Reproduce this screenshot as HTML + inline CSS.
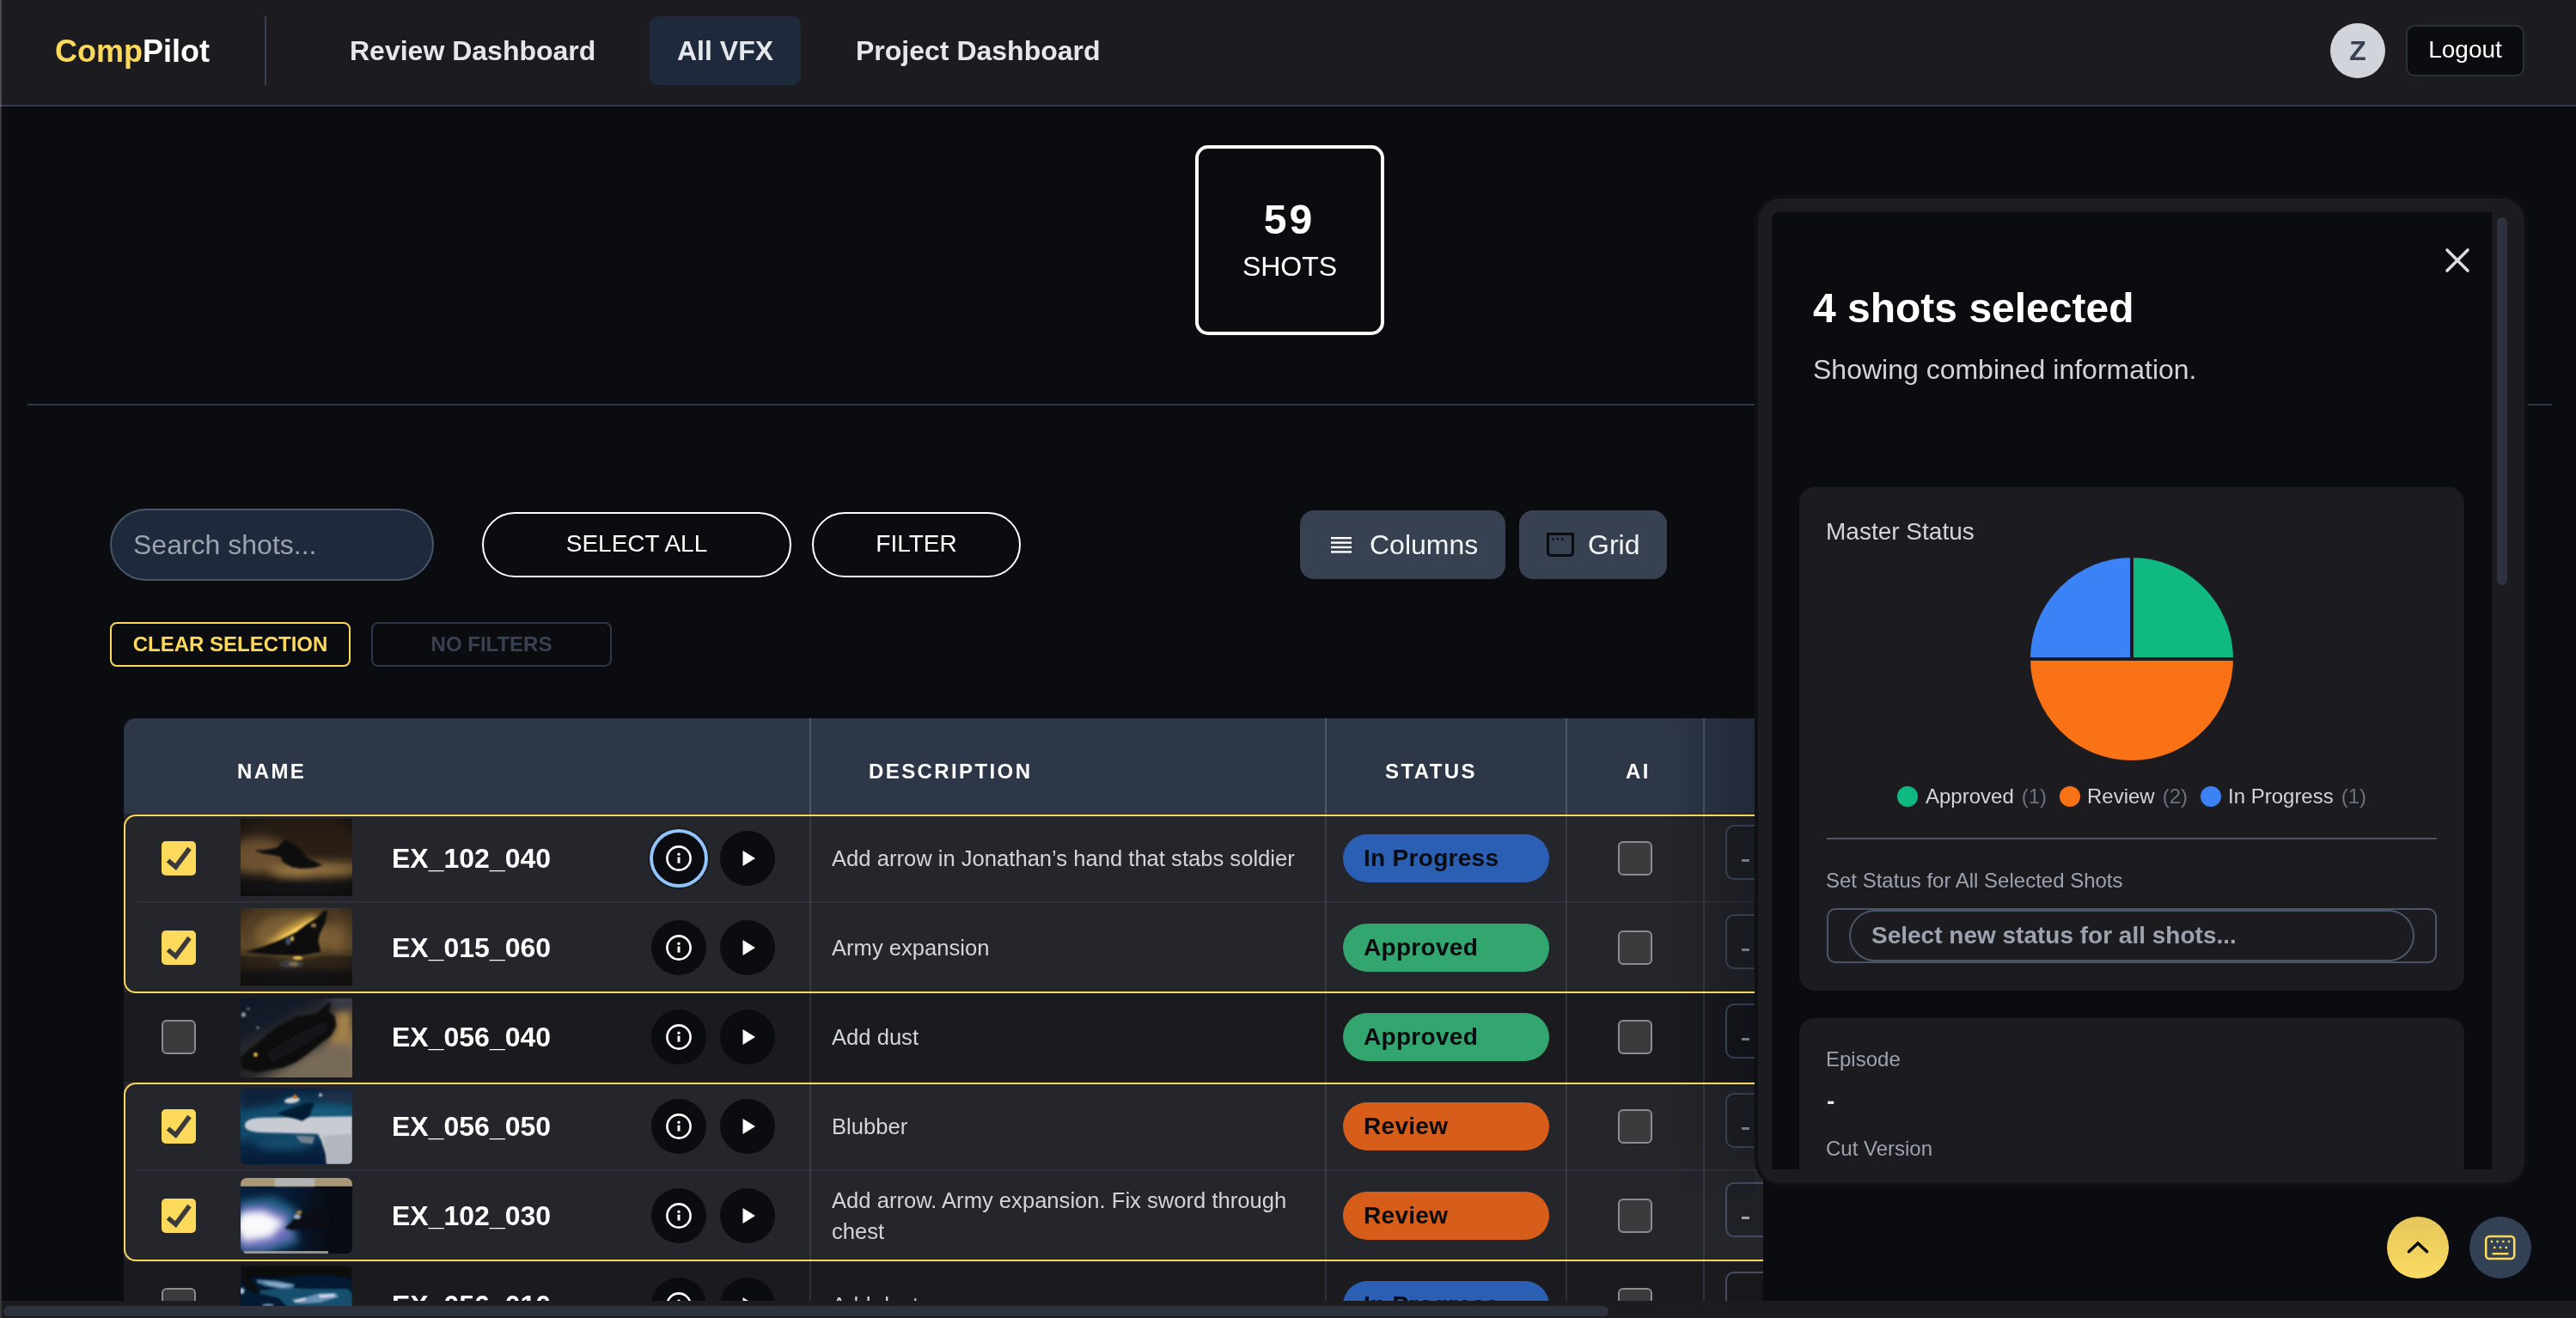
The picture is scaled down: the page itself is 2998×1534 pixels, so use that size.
<!DOCTYPE html><html lang="en"><head><meta charset="utf-8"><title>CompPilot - All VFX</title><style>
*{box-sizing:border-box;margin:0;padding:0}
html,body{width:2998px;height:1534px;overflow:hidden;background:#0b0c10;font-family:"Liberation Sans",Arial,sans-serif;color:#fff}
.abs{position:absolute}
body>*{will-change:transform}
#hdr{position:absolute;left:0;top:0;width:2998px;height:124px;background:#1c1b20;border-bottom:2px solid #303746}
#logo{position:absolute;left:64px;top:38px;font-size:36px;font-weight:bold;line-height:44px;white-space:nowrap}
#logo span{color:#fcd95a}
#vdiv{position:absolute;left:308px;top:19px;width:2px;height:80px;background:#374052}
.nav{position:absolute;top:19px;height:80px;line-height:80px;font-size:32px;font-weight:bold;color:#e5e7eb;padding:0 32px;border-radius:10px;white-space:nowrap}
.nav.on{background:#1e293b}
#av{position:absolute;left:2712px;top:27px;width:64px;height:64px;border-radius:50%;background:#d1d5db;color:#374151;font-weight:bold;font-size:32px;line-height:64px;text-align:center}
#logout{position:absolute;left:2800px;top:29px;width:138px;height:60px;border:2px solid #2a313d;border-radius:10px;background:#0b0c10;font-size:28px;line-height:54px;text-align:center;color:#fff}
#stat{position:absolute;left:1391px;top:169px;width:220px;height:221px;border:4px solid #fff;border-radius:15px;text-align:center}
#stat b{display:block;font-size:48px;line-height:56px;letter-spacing:3px;margin-top:55px;padding-right:1px}
#stat span{display:block;font-size:32px;line-height:40px;margin-top:6px}
#hr{position:absolute;left:32px;top:470px;width:2938px;height:2px;background:#2d3645}
#search{position:absolute;left:128px;top:592px;width:377px;height:84px;border-radius:42px;background:#1e293b;border:2px solid #475569;color:#9ca3af;font-size:32px;line-height:80px;padding-left:25px}
.pill{position:absolute;top:596px;height:76px;border:2px solid #fff;border-radius:38px;font-size:28px;line-height:70px;text-align:center;color:#fff}
.tb{position:absolute;top:594px;height:80px;background:#374151;border-radius:16px;font-size:32px;line-height:80px;color:#f3f4f6}
.chip{position:absolute;top:724px;width:280px;height:52px;border-radius:8px;font-size:24px;font-weight:bold;line-height:48px;text-align:center}
#tbl{position:absolute;left:144px;top:836px;width:1908px;height:678px;overflow:hidden;border-radius:14px 0 0 0}
#thead{position:absolute;left:0;top:0;width:1908px;height:113px;background:#2e3748}
.th{position:absolute;top:0;height:113px;line-height:123px;font-size:24px;font-weight:bold;letter-spacing:2.4px;color:#fff}
.cd{position:absolute;top:0;width:2px;height:678px;background:rgba(120,130,150,.22)}
.cdh{position:absolute;top:0;width:2px;height:112px;background:rgba(140,150,170,.22)}
.row{position:absolute;left:0;width:1908px;height:104px}
.row.sel{background:#25262b}
.row.un{background:#1a1a1f}
.rdiv{position:absolute;left:16px;right:0;bottom:0;height:2px;background:#2d313c}
.grp{position:absolute;left:0;width:1930px;border:2px solid #fcd95a;border-radius:14px 0 0 14px;border-right:none;pointer-events:none}
.cb{position:absolute;left:44px;top:32px;width:40px;height:40px;border-radius:5px}
.cb.on{background:#fcd95a}
.cb.off{background:#3b3b3e;border:2px solid #8b8b90;border-radius:6px}
.th_{position:absolute;left:136px;top:6px;width:130px;height:90px;overflow:hidden}
.nm{position:absolute;left:312px;top:0;line-height:104px;font-size:32px;font-weight:bold;color:#fff;white-space:nowrap}
.ib{position:absolute;top:20px;width:64px;height:64px;border-radius:50%;background:#0b0c10}
.ds{position:absolute;left:824px;top:0;width:560px;height:104px;display:flex;align-items:center;font-size:25.6px;line-height:36px;color:#d1d5db}
.st{position:absolute;left:1419px;top:24px;width:240px;height:56px;border-radius:28px;font-size:28px;font-weight:bold;line-height:56px;padding-left:24px;color:#0b0c10;letter-spacing:.3px;white-space:nowrap}
.ai{position:absolute;left:1739px;top:32px;width:40px;height:40px;background:#3b3b3e;border:2px solid #8b8b90;border-radius:6px}
.bx{position:absolute;left:1864px;top:13px;width:120px;height:64px;border:2px solid #434d63;border-radius:10px;background:rgba(10,12,18,.18)}
.bx i{position:absolute;left:17px;top:38px;width:9px;height:3px;background:#9ca3af}
#hs{position:absolute;left:0;top:1514px;width:2998px;height:20px;background:#1c1b20}
#hs i{position:absolute;left:4px;top:6px;width:1868px;height:12px;border-radius:6px;background:#2d323e}
#panel{position:absolute;left:2046px;top:231px;width:892px;height:1146px;background:#1c1b20;border-radius:26px;box-shadow:0 0 0 4px #0f1014}
#pin{position:absolute;left:16px;top:16px;width:838px;height:1114px;background:#0b0c10;border-radius:8px 0 0 0;overflow:hidden}
#pthumb{position:absolute;left:860px;top:22px;width:12px;height:428px;border-radius:6px;background:#2d323e}
.card{position:absolute;left:32px;width:774px;background:#1c1b20;border-radius:18px}
  .lbl{position:absolute;left:31px;font-size:24px;line-height:30px;color:#9ca3af;white-space:nowrap}
.lg{position:absolute;top:345px;height:30px;font-size:24px;line-height:30px;color:#d1d5db;white-space:nowrap}
.lg i{position:absolute;left:0;top:3px;width:24px;height:24px;border-radius:50%}
.lg span{color:#6b7280;margin-left:9px}
.fab{position:absolute;top:1416px;width:72px;height:72px;border-radius:50%}
</style></head><body>
<div id="hdr"><div id="logo"><span>Comp</span>Pilot</div><div id="vdiv"></div>
<div class="nav" style="left:375px">Review Dashboard</div>
<div class="nav on" style="left:756px;width:176px">All VFX</div>
<div class="nav" style="left:964px">Project Dashboard</div>
<div id="av">Z</div><div id="logout">Logout</div></div>
<div id="stat"><b>59</b><span>SHOTS</span></div><div id="hr"></div>
<div id="search">Search shots...</div>
<div class="pill" style="left:561px;width:360px">SELECT ALL</div>
<div class="pill" style="left:945px;width:243px">FILTER</div>
<div class="tb" style="left:1513px;width:239px"><svg class="abs" style="left:36px;top:30px" width="24" height="20" viewBox="0 0 24 20"><g fill="#fff"><rect x="0" y="1" width="24" height="2.4"/><rect x="0" y="6.4" width="24" height="2.4"/><rect x="0" y="11.8" width="24" height="2.4"/><rect x="0" y="17.2" width="24" height="2.4"/></g></svg><span class="abs" style="left:81px;top:0">Columns</span></div>
<div class="tb" style="left:1768px;width:172px"><svg class="abs" style="left:32px;top:26px" width="32" height="28" viewBox="0 0 32 28"><path d="M1.5 1.5H30.5V23a3.5 3.5 0 0 1-3.5 3.5H5A3.5 3.5 0 0 1 1.5 23Z" fill="none" stroke="#0b0c10" stroke-width="3"/><circle cx="7.6" cy="7.6" r="1.3" fill="#0b0c10"/><circle cx="13" cy="7.6" r="1.3" fill="#0b0c10"/><circle cx="18.4" cy="7.6" r="1.3" fill="#0b0c10"/></svg><span class="abs" style="left:80px;top:0">Grid</span></div>
<div class="chip" style="left:128px;border:2px solid #fcd95a;color:#fcd95a">CLEAR SELECTION</div>
<div class="chip" style="left:432px;border:2px solid #2f3645;color:#374151">NO FILTERS</div>
<div id="tbl"><div id="thead">
<div class="th" style="left:132px">NAME</div>
<div class="th" style="left:867px">DESCRIPTION</div>
<div class="th" style="left:1468px">STATUS</div>
<div class="th" style="left:1748px">AI</div>
</div>
<div class="row sel" style="top:111px">
<div class="cb on"><svg class="abs" style="left:0;top:0" width="40" height="40" viewBox="0 0 40 40"><path d="M7.5 22.5L16.5 30L32.5 8.5" fill="none" stroke="#3a3a3d" stroke-width="5.5"/></svg></div>
<div class="th_"><svg class="abs" style="left:0;top:0;width:100%;height:100%" viewBox="0 0 130 90" preserveAspectRatio="none"><defs><radialGradient id="v1" cx=".5" cy=".5" r=".75"><stop offset=".7" stop-color="#0c0a08" stop-opacity="0"/><stop offset="1" stop-color="#0c0a08" stop-opacity=".7"/></radialGradient><filter id="b1" filterUnits="userSpaceOnUse" x="-60" y="-60" width="250" height="210"><feGaussianBlur stdDeviation="1.2"/></filter><filter id="b1b" filterUnits="userSpaceOnUse" x="-60" y="-60" width="250" height="210"><feGaussianBlur stdDeviation="6"/></filter><linearGradient id="g1" x1="0" y1="0" x2="0" y2="1"><stop offset="0" stop-color="#241b13"/><stop offset=".45" stop-color="#2b1f15"/><stop offset=".62" stop-color="#4a3a24"/><stop offset=".74" stop-color="#241d16"/><stop offset=".82" stop-color="#131214"/><stop offset="1" stop-color="#101013"/></linearGradient></defs><rect width="130" height="90" fill="url(#g1)"/><ellipse cx="22" cy="42" rx="34" ry="20" fill="#7a5c38" opacity=".8" filter="url(#b1b)"/><ellipse cx="84" cy="60" rx="52" ry="7" fill="#a07c44" opacity=".95" filter="url(#b1b)"/><ellipse cx="60" cy="62" rx="22" ry="4" fill="#b08a4c" opacity=".7" filter="url(#b1b)"/><rect width="130" height="90" fill="url(#v1)"/><path d="M16.7 36.8 29.4 36 42 33.8 48 27.9 52.4 24.2 61.3 29.4 70.3 36 76.2 45 95.5 53.9 85 56.9 70.3 58 59 56 49.4 50.2 46.5 44.2 37.5 42 25.7 40.5Z" fill="#0b0b10" filter="url(#b1)"/></svg></div>
<div class="nm">EX_102_040</div>
<div class="ib" style="left:614px;border:2px solid #93c5fd;box-shadow:0 0 0 2px #93c5fd,0 0 0 4px #1a1b1f"><svg class="abs" style="left:14px;top:14px" width="32" height="32" viewBox="0 0 32 32"><circle cx="16" cy="16" r="13.6" fill="none" stroke="#fff" stroke-width="2.6"/><circle cx="16" cy="11.3" r="1.7" fill="#fff"/><rect x="14.5" y="14.6" width="3" height="7" fill="#fff"/></svg></div><div class="ib" style="left:694px"><svg class="abs" style="left:25px;top:22px" width="18" height="20" viewBox="0 0 18 20"><path d="M1.5 1L16 10L1.5 19Z" fill="#fff"/></svg></div>
<div class="ds"><span>Add arrow in Jonathan’s hand that stabs soldier</span></div>
<div class="st" style="background:#2b5fb4">In Progress</div>
<div class="ai"></div><div class="bx"><i></i></div>
<div class="rdiv"></div>
</div>
<div class="row sel" style="top:215px">
<div class="cb on"><svg class="abs" style="left:0;top:0" width="40" height="40" viewBox="0 0 40 40"><path d="M7.5 22.5L16.5 30L32.5 8.5" fill="none" stroke="#3a3a3d" stroke-width="5.5"/></svg></div>
<div class="th_"><svg class="abs" style="left:0;top:0;width:100%;height:100%" viewBox="0 0 130 90" preserveAspectRatio="none"><defs><radialGradient id="v2" cx=".5" cy=".4" r=".8"><stop offset=".6" stop-color="#120e08" stop-opacity="0"/><stop offset="1" stop-color="#120e08" stop-opacity=".75"/></radialGradient><filter id="b2" filterUnits="userSpaceOnUse" x="-60" y="-60" width="250" height="210"><feGaussianBlur stdDeviation="1.1"/></filter><filter id="b2b" filterUnits="userSpaceOnUse" x="-60" y="-60" width="250" height="210"><feGaussianBlur stdDeviation="5"/></filter><linearGradient id="g2" x1="0" y1="0" x2="0" y2="1"><stop offset="0" stop-color="#4a3822"/><stop offset=".5" stop-color="#5e4828"/><stop offset=".6" stop-color="#4a3a22"/><stop offset=".64" stop-color="#2e2418"/><stop offset=".76" stop-color="#2a2016"/><stop offset=".84" stop-color="#141316"/><stop offset="1" stop-color="#101014"/></linearGradient></defs><rect width="130" height="90" fill="url(#g2)"/><ellipse cx="60" cy="32" rx="44" ry="26" fill="#8a6c3c" opacity=".7" filter="url(#b2b)"/><ellipse cx="110" cy="34" rx="12" ry="16" fill="#8a6a3c" opacity=".6" filter="url(#b2b)"/><path d="M30 44 50 26 86 8 90 14 64 30 40 44Z" fill="#f0c04a" filter="url(#b2b)"/><path d="M36 42 62 24 88 10 66 28 44 40Z" fill="#f2cc58" filter="url(#b2)"/><rect width="130" height="90" fill="url(#v2)"/><path d="M5.6 51.3 25.7 45 48 36 65 27.9 77.7 18.2 88.8 11.5 98.5 1.9 101.5 3.3 98.5 16.7 91.8 30.9 90.3 37.5 93.3 50.9 70.3 55.4 37.5 54.6 18.2 52.4Z" fill="#0e0e11" filter="url(#b2)"/><ellipse cx="85" cy="20" rx="3.2" ry="2.6" fill="#9a7a40" filter="url(#b2)"/><ellipse cx="55.4" cy="38.5" rx="3" ry="4.5" fill="#6878a0" opacity=".6" filter="url(#b2)"/><ellipse cx="60" cy="35.5" rx="2" ry="3" fill="#f0d060" opacity=".9" filter="url(#b2)"/><ellipse cx="66.5" cy="58" rx="6" ry="2.2" fill="#f0c850" opacity=".9" filter="url(#b2)"/><ellipse cx="59" cy="65" rx="14" ry="4.5" fill="#5a6c90" opacity=".35" filter="url(#b2)"/><ellipse cx="62" cy="65" rx="6" ry="2.5" fill="#b09050" opacity=".6" filter="url(#b2)"/></svg></div>
<div class="nm">EX_015_060</div>
<div class="ib" style="left:614px"><svg class="abs" style="left:16px;top:16px" width="32" height="32" viewBox="0 0 32 32"><circle cx="16" cy="16" r="13.6" fill="none" stroke="#fff" stroke-width="2.6"/><circle cx="16" cy="11.3" r="1.7" fill="#fff"/><rect x="14.5" y="14.6" width="3" height="7" fill="#fff"/></svg></div><div class="ib" style="left:694px"><svg class="abs" style="left:25px;top:22px" width="18" height="20" viewBox="0 0 18 20"><path d="M1.5 1L16 10L1.5 19Z" fill="#fff"/></svg></div>
<div class="ds"><span>Army expansion</span></div>
<div class="st" style="background:#33a56f">Approved</div>
<div class="ai"></div><div class="bx"><i></i></div>
</div>
<div class="row un" style="top:319px">
<div class="cb off"></div>
<div class="th_" style="top:7px;height:92px"><svg class="abs" style="left:0;top:0;width:100%;height:100%" viewBox="0 0 130 90" preserveAspectRatio="none"><defs><filter id="b3" filterUnits="userSpaceOnUse" x="-60" y="-60" width="250" height="210"><feGaussianBlur stdDeviation="1.2"/></filter><filter id="b3b" filterUnits="userSpaceOnUse" x="-60" y="-60" width="250" height="210"><feGaussianBlur stdDeviation="5"/></filter><linearGradient id="g3" x1="0" y1="0" x2=".75" y2="1"><stop offset="0" stop-color="#0e1626"/><stop offset=".3" stop-color="#151b28"/><stop offset=".42" stop-color="#26282d"/><stop offset=".5" stop-color="#1c1d22"/><stop offset=".68" stop-color="#2a2a2c"/><stop offset=".8" stop-color="#6e6252"/><stop offset="1" stop-color="#7a6a52"/></linearGradient></defs><rect width="130" height="90" fill="url(#g3)"/><path d="M108 14 130 10 130 62 112 60 100 52 110 36Z" fill="#a4824a" filter="url(#b3b)"/><path d="M60 80 100 54 130 50 130 90 40 90Z" fill="#776a58" filter="url(#b3b)"/><rect x="104" y="-6" width="32" height="18" fill="#3a3e48" filter="url(#b3b)"/><path d="M0.4 68 11 58 41 33 66 20.5 87 17.5 94.5 12 103.6 3.8 105 5.3 102 15 109.6 20.5 111 32 105 42.5 94.5 50 75.5 65 64 72.8 49 79 18.6 84 1.9 80.4Z" fill="#0d0d11" filter="url(#b3)"/><path d="M30 62 70 38 100 26 102 36 70 56 36 74Z" fill="#17171b" opacity=".8" filter="url(#b3)"/><circle cx="17.5" cy="64" r="2.4" fill="#f0c050" filter="url(#b3)"/><circle cx="3.4" cy="18.6" r="2.6" fill="#9a9ea8" filter="url(#b3)"/><circle cx="9" cy="12" r="2" fill="#5a5e68" filter="url(#b3)"/><circle cx="20" cy="33.4" r="1.6" fill="#80848e" filter="url(#b3)"/></svg></div>
<div class="nm">EX_056_040</div>
<div class="ib" style="left:614px"><svg class="abs" style="left:16px;top:16px" width="32" height="32" viewBox="0 0 32 32"><circle cx="16" cy="16" r="13.6" fill="none" stroke="#fff" stroke-width="2.6"/><circle cx="16" cy="11.3" r="1.7" fill="#fff"/><rect x="14.5" y="14.6" width="3" height="7" fill="#fff"/></svg></div><div class="ib" style="left:694px"><svg class="abs" style="left:25px;top:22px" width="18" height="20" viewBox="0 0 18 20"><path d="M1.5 1L16 10L1.5 19Z" fill="#fff"/></svg></div>
<div class="ds"><span>Add dust</span></div>
<div class="st" style="background:#33a56f">Approved</div>
<div class="ai"></div><div class="bx"><i></i></div>
</div>
<div class="row sel" style="top:423px">
<div class="cb on"><svg class="abs" style="left:0;top:0" width="40" height="40" viewBox="0 0 40 40"><path d="M7.5 22.5L16.5 30L32.5 8.5" fill="none" stroke="#3a3a3d" stroke-width="5.5"/></svg></div>
<div class="th_" style="top:8px;height:88px"><svg class="abs" style="left:0;top:0;width:100%;height:100%" viewBox="0 0 130 90" preserveAspectRatio="none"><defs><filter id="b4" filterUnits="userSpaceOnUse" x="-60" y="-60" width="250" height="210"><feGaussianBlur stdDeviation="1.3"/></filter><filter id="b4b" filterUnits="userSpaceOnUse" x="-60" y="-60" width="250" height="210"><feGaussianBlur stdDeviation="5"/></filter><linearGradient id="g4" x1="0" y1="0" x2="0" y2="1"><stop offset="0" stop-color="#08203c"/><stop offset=".28" stop-color="#124e6e"/><stop offset=".6" stop-color="#124a6a"/><stop offset=".78" stop-color="#082444"/><stop offset="1" stop-color="#061c38"/></linearGradient><clipPath id="c4"><rect width="130" height="90" rx="6"/></clipPath></defs><g clip-path="url(#c4)"><rect width="130" height="90" fill="url(#g4)"/><path d="M0 0H60L40 16 0 26Z" fill="#07203a" filter="url(#b4b)"/><ellipse cx="112" cy="10" rx="22" ry="9" fill="#26324a" opacity=".8" filter="url(#b4b)"/><ellipse cx="100" cy="28" rx="30" ry="8" fill="#176080" opacity=".8" filter="url(#b4b)"/><ellipse cx="50" cy="66" rx="34" ry="7" fill="#1a5c7c" opacity=".75" filter="url(#b4b)"/><path d="M5 43Q6 35 26 34.5L130 33 130 90 100 90 99 78 94 62 90 54 30 52.5Q6 52 5 45Z" fill="#c8cbd2" filter="url(#b4)"/><path d="M96 56 130 54 130 90 102 90Z" fill="#a8adb6" opacity=".7" filter="url(#b4)"/><path d="M64 56 86 57 84 66 70 64Z" fill="#8a929c" opacity=".8" filter="url(#b4)"/><path d="M42.4 30 55.5 24.8 76 17.5 86.2 16.8 79.6 33.5 71.6 38.6 65 36.4Z" fill="#061a30" filter="url(#b4)"/><ellipse cx="60" cy="14" rx="9" ry="3.4" fill="#d4d6da" transform="rotate(-8 60 14)" filter="url(#b4)"/><circle cx="63.2" cy="9.8" r="2.3" fill="#e8781c" filter="url(#b4)"/><circle cx="93" cy="7.6" r="2" fill="#c8ccd0" filter="url(#b4)"/></g></svg></div>
<div class="nm">EX_056_050</div>
<div class="ib" style="left:614px"><svg class="abs" style="left:16px;top:16px" width="32" height="32" viewBox="0 0 32 32"><circle cx="16" cy="16" r="13.6" fill="none" stroke="#fff" stroke-width="2.6"/><circle cx="16" cy="11.3" r="1.7" fill="#fff"/><rect x="14.5" y="14.6" width="3" height="7" fill="#fff"/></svg></div><div class="ib" style="left:694px"><svg class="abs" style="left:25px;top:22px" width="18" height="20" viewBox="0 0 18 20"><path d="M1.5 1L16 10L1.5 19Z" fill="#fff"/></svg></div>
<div class="ds"><span>Blubber</span></div>
<div class="st" style="background:#d75e1a">Review</div>
<div class="ai"></div><div class="bx"><i></i></div>
<div class="rdiv"></div>
</div>
<div class="row sel" style="top:527px">
<div class="cb on"><svg class="abs" style="left:0;top:0" width="40" height="40" viewBox="0 0 40 40"><path d="M7.5 22.5L16.5 30L32.5 8.5" fill="none" stroke="#3a3a3d" stroke-width="5.5"/></svg></div>
<div class="th_" style="top:8px;height:88px"><svg class="abs" style="left:0;top:0;width:100%;height:100%" viewBox="0 0 130 90" preserveAspectRatio="none"><defs><filter id="b5" filterUnits="userSpaceOnUse" x="-60" y="-60" width="250" height="210"><feGaussianBlur stdDeviation="1.3"/></filter><filter id="b5b" filterUnits="userSpaceOnUse" x="-60" y="-60" width="250" height="210"><feGaussianBlur stdDeviation="5"/></filter><linearGradient id="g5" x1="0" y1="0" x2="1" y2="0"><stop offset="0" stop-color="#06203e"/><stop offset=".55" stop-color="#071a32"/><stop offset=".8" stop-color="#080d16"/><stop offset="1" stop-color="#080c14"/></linearGradient><linearGradient id="g5r" x1="0" y1="0" x2="1" y2="0"><stop offset="0" stop-color="#080c14" stop-opacity="0"/><stop offset=".7" stop-color="#080c14" stop-opacity=".7"/><stop offset="1" stop-color="#080c14" stop-opacity=".8"/></linearGradient><clipPath id="c5"><rect width="130" height="90" rx="7"/></clipPath></defs><g clip-path="url(#c5)"><rect width="130" height="90" fill="url(#g5)"/><path d="M0 26 40 22 70 40 60 60 70 78 30 90 0 90Z" fill="#20688a" opacity=".85" filter="url(#b5b)"/><path d="M0 34 30 32 58 44 52 56 66 70 30 84 0 86Z" fill="#6c6ebc" filter="url(#b5b)"/><path d="M0 42 26 40 52 52 36 70 0 76Z" fill="#f2f2f6" filter="url(#b5b)"/><ellipse cx="16" cy="56" rx="22" ry="11" fill="#fafafc" filter="url(#b5b)"/><rect x="56" y="0" width="74" height="90" fill="url(#g5r)"/><path d="M51.6 59.8 59.9 51.6 71.2 42.7 82.5 34.5 90 39.7 99.8 42.7 105.9 51.6 105 57.5 71.2 60.5 59.9 62Z" fill="#090c14" filter="url(#b5)"/><ellipse cx="66" cy="46" rx="4" ry="3" fill="#c8ccd8" opacity=".8" filter="url(#b5)"/><ellipse cx="68.2" cy="41" rx="3" ry="2.2" fill="#b8863c" filter="url(#b5)"/><rect width="130" height="10" fill="#a89878"/><rect x="40" y="0" width="46" height="10" fill="#b8bcc4" opacity=".8" filter="url(#b5)"/><rect x="4" y="87" width="98" height="3" fill="#a0a0a0" opacity=".9"/></g></svg></div>
<div class="nm">EX_102_030</div>
<div class="ib" style="left:614px"><svg class="abs" style="left:16px;top:16px" width="32" height="32" viewBox="0 0 32 32"><circle cx="16" cy="16" r="13.6" fill="none" stroke="#fff" stroke-width="2.6"/><circle cx="16" cy="11.3" r="1.7" fill="#fff"/><rect x="14.5" y="14.6" width="3" height="7" fill="#fff"/></svg></div><div class="ib" style="left:694px"><svg class="abs" style="left:25px;top:22px" width="18" height="20" viewBox="0 0 18 20"><path d="M1.5 1L16 10L1.5 19Z" fill="#fff"/></svg></div>
<div class="ds"><span>Add arrow. Army expansion. Fix sword through chest</span></div>
<div class="st" style="background:#d75e1a">Review</div>
<div class="ai"></div><div class="bx"><i></i></div>
</div>
<div class="row un" style="top:631px">
<div class="cb off"></div>
<div class="th_"><svg class="abs" style="left:0;top:0;width:100%;height:100%" viewBox="0 0 130 90" preserveAspectRatio="none"><defs><filter id="b6" filterUnits="userSpaceOnUse" x="-60" y="-60" width="250" height="210"><feGaussianBlur stdDeviation="1"/></filter></defs><rect width="130" height="90" fill="#041a32"/><path d="M21.7 29.2 55.0 24.9 76.4 27.0 124.7 27.0 130.0 32.4 130.0 48.5 55.0 48.5 44.2 37.8 22.8 32.4 Z" fill="#14506e" filter="url(#b6)"/><path d="M19.0 16.3 41.6 17.4 63.5 21.7 60.3 27.0 44.2 27.0 28.2 23.8 19.0 20.1 Z" fill="#4a7898" filter="url(#b6)"/><path d="M23.9 17.9 44.2 20.1 61.4 22.8 49.6 26.0 33.5 22.8 Z" fill="#8aa8cc" filter="url(#b6)"/><path d="M59.2 39.4 76.4 36.7 89.8 32.4 111.3 31.9 113.9 36.7 92.5 43.1 71.0 44.2 63.0 43.1 Z" fill="#6a90b4" filter="url(#b6)"/><path d="M61.9 41.0 75.3 37.8 76.4 39.9 64.6 42.6 Z" fill="#e8e4e0" filter="url(#b6)"/><path d="M90.3 34.0 108.6 32.9 109.7 36.2 92.5 37.8 Z" fill="#d0d8e4" filter="url(#b6)"/><ellipse cx="1.5" cy="29.5" rx="3" ry="3.5" fill="#a8c0d8" filter="url(#b6)"/><ellipse cx="32" cy="46" rx="7" ry="1.5" fill="#7aa0c8" filter="url(#b6)"/><path d="M0.0 0.0 130.0 0.0 130.0 15.3 97.9 10.4 65.7 12.1 49.6 13.7 9.9 13.7 21.2 29.7 16.4 32.4 0.0 18.5 Z" fill="#07090e" filter="url(#b6)"/></svg></div>
<div class="nm">EX_056_010</div>
<div class="ib" style="left:614px"><svg class="abs" style="left:16px;top:16px" width="32" height="32" viewBox="0 0 32 32"><circle cx="16" cy="16" r="13.6" fill="none" stroke="#fff" stroke-width="2.6"/><circle cx="16" cy="11.3" r="1.7" fill="#fff"/><rect x="14.5" y="14.6" width="3" height="7" fill="#fff"/></svg></div><div class="ib" style="left:694px"><svg class="abs" style="left:25px;top:22px" width="18" height="20" viewBox="0 0 18 20"><path d="M1.5 1L16 10L1.5 19Z" fill="#fff"/></svg></div>
<div class="ds"><span>Add dust</span></div>
<div class="st" style="background:#2b5fb4">In Progress</div>
<div class="ai"></div><div class="bx"><i></i></div>
</div>
<div class="cd" style="left:798px"></div><div class="cdh" style="left:798px"></div>
<div class="cd" style="left:1398px"></div><div class="cdh" style="left:1398px"></div>
<div class="cd" style="left:1678px"></div><div class="cdh" style="left:1678px"></div>
<div class="cd" style="left:1838px"></div><div class="cdh" style="left:1838px"></div>
<div class="abs" style="left:1800px;top:0;width:98px;height:560px;background:linear-gradient(to right,rgba(6,10,18,0),rgba(6,10,18,.3));-webkit-mask-image:linear-gradient(to bottom,#000 88%,transparent);mask-image:linear-gradient(to bottom,#000 88%,transparent)"></div>
<div class="grp" style="top:112px;height:208px"></div>
<div class="grp" style="top:424px;height:208px"></div>
</div>
<div id="hs"><i></i></div>
<div class="abs" style="left:280px;top:1473px;width:130px;height:47px;overflow:hidden"><div class="abs" style="left:0;top:0;width:130px;height:90px"><svg class="abs" style="left:0;top:0;width:100%;height:100%" viewBox="0 0 130 90" preserveAspectRatio="none"><defs><filter id="b6" filterUnits="userSpaceOnUse" x="-60" y="-60" width="250" height="210"><feGaussianBlur stdDeviation="1"/></filter></defs><rect width="130" height="90" fill="#041a32"/><path d="M21.7 29.2 55.0 24.9 76.4 27.0 124.7 27.0 130.0 32.4 130.0 48.5 55.0 48.5 44.2 37.8 22.8 32.4 Z" fill="#14506e" filter="url(#b6)"/><path d="M19.0 16.3 41.6 17.4 63.5 21.7 60.3 27.0 44.2 27.0 28.2 23.8 19.0 20.1 Z" fill="#4a7898" filter="url(#b6)"/><path d="M23.9 17.9 44.2 20.1 61.4 22.8 49.6 26.0 33.5 22.8 Z" fill="#8aa8cc" filter="url(#b6)"/><path d="M59.2 39.4 76.4 36.7 89.8 32.4 111.3 31.9 113.9 36.7 92.5 43.1 71.0 44.2 63.0 43.1 Z" fill="#6a90b4" filter="url(#b6)"/><path d="M61.9 41.0 75.3 37.8 76.4 39.9 64.6 42.6 Z" fill="#e8e4e0" filter="url(#b6)"/><path d="M90.3 34.0 108.6 32.9 109.7 36.2 92.5 37.8 Z" fill="#d0d8e4" filter="url(#b6)"/><ellipse cx="1.5" cy="29.5" rx="3" ry="3.5" fill="#a8c0d8" filter="url(#b6)"/><ellipse cx="32" cy="46" rx="7" ry="1.5" fill="#7aa0c8" filter="url(#b6)"/><path d="M0.0 0.0 130.0 0.0 130.0 15.3 97.9 10.4 65.7 12.1 49.6 13.7 9.9 13.7 21.2 29.7 16.4 32.4 0.0 18.5 Z" fill="#07090e" filter="url(#b6)"/></svg></div></div>
<div id="panel"><div id="pin">
<svg class="abs" style="left:782px;top:40px" width="32" height="32" viewBox="0 0 32 32"><path d="M4 4L28 28M28 4L4 28" stroke="#d9dce1" stroke-width="3.6" stroke-linecap="round"/></svg>
<div class="abs" style="left:48px;top:84px;font-size:48px;font-weight:bold;line-height:56px;white-space:nowrap">4 shots selected</div>
<div class="abs" style="left:48px;top:163px;font-size:32px;line-height:40px;color:#d1d5db;white-space:nowrap">Showing combined information.</div>
<div class="card" style="top:320px;height:586px">
<div class="abs" style="left:31px;top:35px;font-size:28px;line-height:34px;color:#d1d5db">Master Status</div>
<svg class="abs" style="left:263px;top:76px" width="248" height="248" viewBox="-124 -124 248 248"><g stroke="#1c1b20" stroke-width="4" stroke-linejoin="round"><path d="M0 0V-120A120 120 0 0 1 120 0Z" fill="#10b981"/><path d="M0 0H120A120 120 0 0 1 -120 0Z" fill="#f97316"/><path d="M0 0H-120A120 120 0 0 1 0 -120Z" fill="#3b82f6"/></g></svg>
<div class="lg" style="left:114px;padding-left:33px"><i style="background:#10b981"></i>Approved<span>(1)</span></div>
<div class="lg" style="left:303px;padding-left:32px"><i style="background:#f97316"></i>Review<span>(2)</span></div>
<div class="lg" style="left:467px;padding-left:32px"><i style="background:#3b82f6"></i>In Progress<span>(1)</span></div>
<div class="abs" style="left:32px;top:408px;width:710px;height:2px;background:#4b5563"></div>
<div class="lbl" style="top:443px">Set Status for All Selected Shots</div>
<div class="abs" style="left:32px;top:490px;width:710px;height:64px;border:2px solid #4b5568;border-radius:10px"><div class="abs" style="left:24px;top:0;width:658px;height:60px;border:2px solid #4b5568;border-radius:30px;font-size:28px;font-weight:bold;line-height:56px;color:#9ca3af;padding-left:24px;white-space:nowrap">Select new status for all shots...</div></div>
</div>
<div class="card" style="top:938px;height:300px">
<div class="lbl" style="top:33px">Episode</div>
<div class="abs" style="left:32px;top:80px;font-size:28px;font-weight:bold;line-height:34px;color:#e5e7eb">-</div>
<div class="lbl" style="top:137px">Cut Version</div>
</div>
</div><div id="pthumb"></div></div>
<div class="fab" style="left:2778px;background:linear-gradient(#e4c65a,#fbdb62)"><svg class="abs" style="left:18px;top:20px" width="36" height="28" viewBox="0 0 36 28"><path d="M7.5 20.7L18 11L28.5 20.7" fill="none" stroke="#0b0c10" stroke-width="3.6" stroke-linecap="round" stroke-linejoin="miter"/></svg></div>
<div class="fab" style="left:2874px;background:#334155"><svg class="abs" style="left:16px;top:20px" width="40" height="32" viewBox="0 0 40 32"><rect x="3.2" y="3" width="33" height="26" rx="4" fill="none" stroke="#fcd95a" stroke-width="2.6"/><g fill="#fcd95a"><rect x="8.8" y="7.8" width="2.4" height="2.4"/><rect x="15.4" y="7.8" width="2.4" height="2.4"/><rect x="22.1" y="7.8" width="2.4" height="2.4"/><rect x="28.8" y="7.8" width="2.4" height="2.4"/><rect x="12.0" y="14.8" width="2.4" height="2.4"/><rect x="18.8" y="14.8" width="2.4" height="2.4"/><rect x="25.6" y="14.8" width="2.4" height="2.4"/><rect x="10.4" y="22" width="19" height="2.4"/></g></svg></div>
<div class="abs" style="left:0;top:0;width:2px;height:1534px;background:linear-gradient(#494a4f 0,#494a4f 122px,#5a5e68 122px,#5a5e68 124px,#38393c 124px)"></div>
</body></html>
